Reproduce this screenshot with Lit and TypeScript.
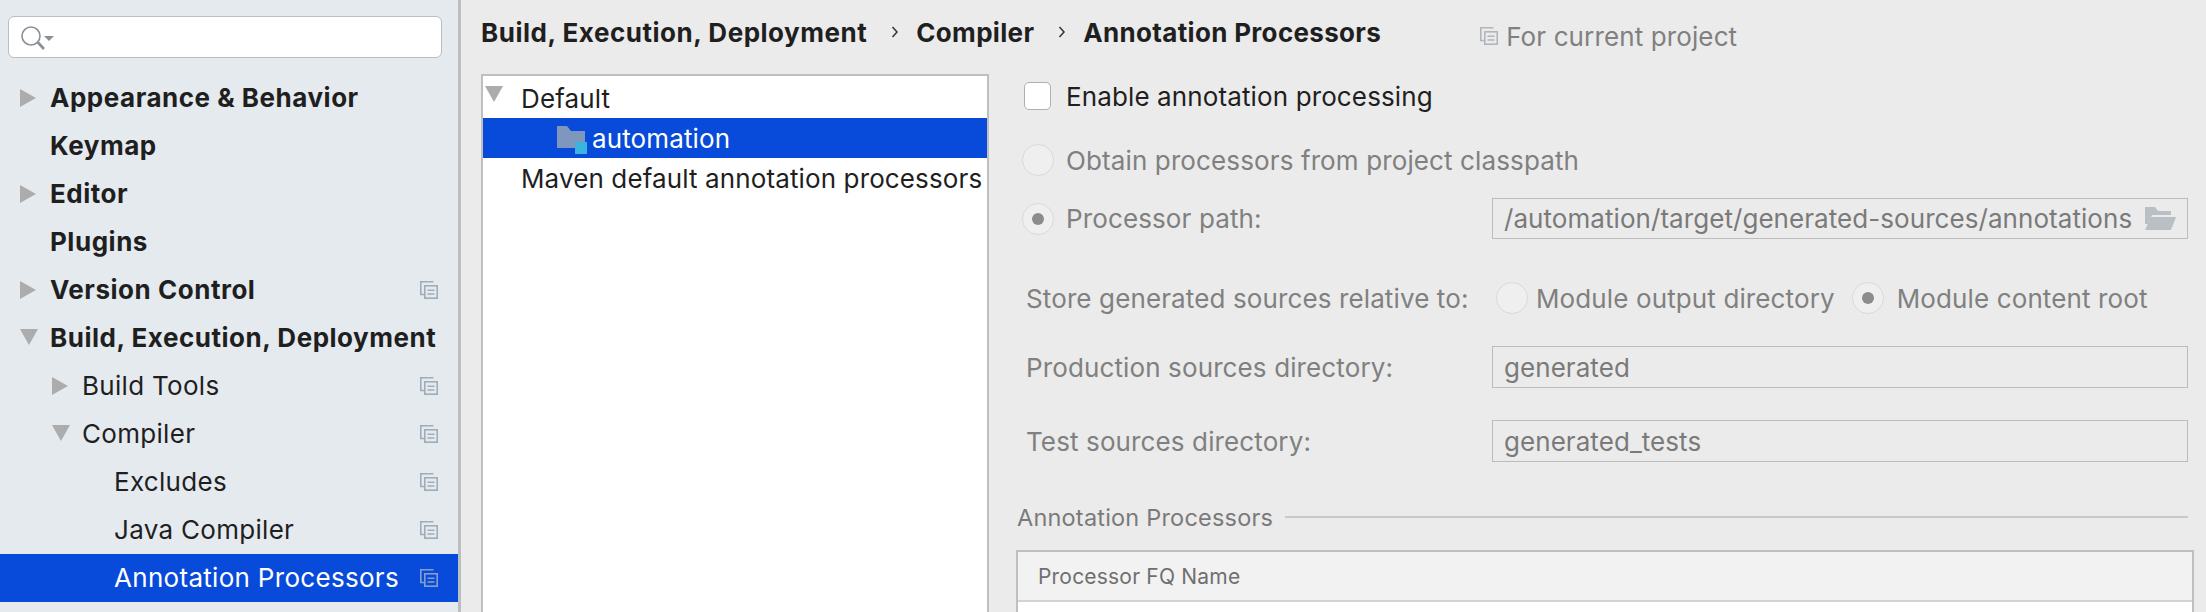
import { LitElement, css, html, svg } from 'lit';
import { customElement } from 'lit/decorators.js';

type NavItem = {
  label: string;
  level: number;
  bold?: boolean;
  arrow?: 'right' | 'down';
  copy?: boolean;
  selected?: boolean;
};

const NAV: NavItem[] = [
  { label: 'Appearance & Behavior', level: 0, bold: true, arrow: 'right' },
  { label: 'Keymap', level: 0, bold: true },
  { label: 'Editor', level: 0, bold: true, arrow: 'right' },
  { label: 'Plugins', level: 0, bold: true },
  { label: 'Version Control', level: 0, bold: true, arrow: 'right', copy: true },
  { label: 'Build, Execution, Deployment', level: 0, bold: true, arrow: 'down' },
  { label: 'Build Tools', level: 1, arrow: 'right', copy: true },
  { label: 'Compiler', level: 1, arrow: 'down', copy: true },
  { label: 'Excludes', level: 2, copy: true },
  { label: 'Java Compiler', level: 2, copy: true },
  { label: 'Annotation Processors', level: 2, copy: true, selected: true },
];

const arrowIcon = (dir: 'right' | 'down') =>
  dir === 'right'
    ? html`<svg class="arrow" width="18" height="18" viewBox="0 0 18 18">
        <path d="M0 0L16 9L0 18Z" fill="#acacac" />
      </svg>`
    : html`<svg class="arrow" width="18" height="18" viewBox="0 0 18 18">
        <path d="M0 0H18L9 16Z" fill="#acacac" />
      </svg>`;

const copyIcon = (color = '#9fadba') => html`<svg width="18" height="18" viewBox="0 0 18 18" fill="none" stroke=${color} stroke-width="1.6">
  ${svg`<path d="M13.5 .8H.8V13.5H4.5" />
  <rect x="4.8" y="4.8" width="12.4" height="12.4" />
  <path d="M7.5 9.2H14.5M7.5 13H14.5" />`}
</svg>`;

const searchIcon = html`<svg width="34" height="26" viewBox="0 0 34 26" fill="none" stroke="#8b9096">
  <circle cx="10" cy="10" r="9" stroke-width="1.6" />
  <path d="M17 16.5L23 23" stroke-width="2.6" />
  <path d="M23 10H33L28 15Z" fill="#8b9096" stroke="none" />
</svg>`;

const chevron = html`<svg class="chevron" width="8" height="14" viewBox="0 0 8 14" fill="none" stroke="#333" stroke-width="1.5">
  <path d="M1.5 2L6 7L1.5 12" />
</svg>`;

const folderOpen = html`<svg width="31" height="23" viewBox="0 0 31 23">
  <path d="M0 0H10L13 4H26V8H7L3 17H0Z" fill="#b9bfc4" />
  <path d="M6 10H31L26 23H0Z" fill="#b9bfc4" />
</svg>`;

const moduleFolder = html`<svg class="module" width="30" height="28" viewBox="0 0 30 28">
  <path d="M0 0H10L14 5H28V22H0Z" fill="#7f96bd" />
  <rect x="18" y="16" width="12" height="12" fill="#3cb4e0" />
</svg>`;

@customElement('app-root')
export class AppRoot extends LitElement {
  static styles = css`
    :host {
      display: flex;
      width: 2206px;
      height: 612px;
      overflow: hidden;
      background: #ebebeb;
      color: #1f1f1f;
      font-family: Inter, 'Liberation Sans', sans-serif;
      font-size: 26px;
      letter-spacing: 0.12px;
    }

    .sidebar {
      flex: none;
      box-sizing: content-box;
      width: 458px;
      border-right: 3px solid #bcbfc2;
      background: #e5eaef;
      padding-top: 16px;
      letter-spacing: 0.3px;
    }
    .search {
      display: flex;
      align-items: center;
      box-sizing: border-box;
      width: 434px;
      height: 42px;
      margin: 0 0 16px 8px;
      padding: 3px 0 0 12px;
      background: #fff;
      border: 1px solid #b8bec4;
      border-radius: 6px;
    }
    .nav-row {
      display: flex;
      align-items: center;
      box-sizing: border-box;
      height: 48px;
      padding-right: 20px;
      white-space: nowrap;
    }
    .nav-row.bold {
      font-weight: 700;
      letter-spacing: 0.52px;
    }
    .nav-row.selected {
      background: #084ad9;
      color: #fff;
    }
    .arrow-slot {
      flex: none;
      width: 30px;
      display: flex;
      align-items: center;
    }
    .nav-label {
      flex: 1;
      margin-top: -2px;
    }

    .main {
      flex: 1;
      min-width: 0;
    }
    .header {
      display: flex;
      align-items: center;
      height: 74px;
      padding: 0 0 10px 20px;
      box-sizing: border-box;
      white-space: nowrap;
    }
    .crumb {
      font-weight: 700;
      letter-spacing: 0.32px;
    }
    .crumb.root {
      letter-spacing: 0.52px;
    }
    .chevron {
      margin: 0 17px 0 24px;
    }
    .scope {
      display: flex;
      align-items: center;
      gap: 8px;
      margin: 8px 0 0 99px;
      color: #808080;
    }

    .body {
      display: flex;
    }
    .tree {
      flex: none;
      box-sizing: border-box;
      width: 508px;
      height: 538px;
      margin-left: 20px;
      background: #fff;
      border: 2px solid #bfbfbf;
      border-bottom: 0;
    }
    .tree-row {
      display: flex;
      align-items: center;
      box-sizing: border-box;
      height: 40px;
      padding-left: 38px;
      white-space: nowrap;
    }
    .tree-row:first-child {
      height: 42px;
      padding-top: 2px;
    }
    .tree-row .arrow {
      margin: -6px 18px 0 -36px;
    }
    .tree-row.selected {
      background: #084ad9;
      color: #fff;
      padding-left: 74px;
      gap: 5px;
    }
    .module {
      margin-top: 4px;
    }

    .form {
      flex: 1;
      min-width: 0;
      padding: 0 12px 0 27px;
      white-space: nowrap;
    }
    .row {
      display: flex;
      align-items: center;
    }
    .disabled {
      color: #808080;
    }
    .check-row {
      height: 28px;
      margin-top: 8px;
      padding-left: 8px;
      gap: 15px;
    }
    .checkbox {
      flex: none;
      box-sizing: border-box;
      width: 27px;
      height: 28px;
      background: #fff;
      border: 1px solid #b0b0b0;
      border-radius: 5px;
    }
    .radio-row {
      height: 32px;
      padding-left: 6px;
      gap: 12px;
    }
    .radio {
      flex: none;
      display: flex;
      align-items: center;
      justify-content: center;
      box-sizing: border-box;
      width: 32px;
      height: 32px;
      background: #efefef;
      border: 1px solid #dadada;
      border-radius: 50%;
    }
    .radio.on::after {
      content: '';
      width: 12px;
      height: 12px;
      border-radius: 50%;
      background: #8c8c8c;
    }
    .obtain {
      margin-top: 34px;
    }
    .path-row {
      height: 41px;
      margin-top: 22px;
      padding-left: 6px;
    }
    .path-row .radio {
      margin-right: 12px;
    }
    .field {
      display: flex;
      align-items: center;
      justify-content: space-between;
      box-sizing: border-box;
      width: 696px;
      height: 100%;
      margin: 0 6px 0 auto;
      padding: 0 11px;
      border: 1px solid #bcbcbc;
      color: #7a7a7a;
      letter-spacing: 0.06px;
    }
    .store-row {
      height: 32px;
      margin-top: 43px;
      padding-left: 10px;
    }
    .store-label {
      width: 466px;
    }
    .store-row .first {
      margin: 0 8px 0 4px;
    }
    .store-row .second {
      margin: 0 13px 0 17px;
    }
    .dir-row {
      height: 42px;
      margin-top: 32px;
      padding-left: 10px;
    }
    .section {
      display: flex;
      align-items: center;
      height: 26px;
      margin: 42px 6px 0 1px;
      gap: 12px;
      font-size: 23.5px;
      letter-spacing: 0.2px;
      color: #7a7a7a;
    }
    .section::after {
      content: '';
      flex: 1;
      height: 2px;
      background: #c8c8c8;
    }
    .table {
      height: 100px;
      margin-top: 20px;
      background: #fff;
      border: 2px solid #bfbfbf;
      border-bottom: 0;
    }
    .table-head {
      display: flex;
      align-items: center;
      box-sizing: border-box;
      height: 50px;
      padding-left: 20px;
      background: #f2f2f2;
      border-bottom: 2px solid #d2d2d2;
      font-size: 21px;
      letter-spacing: 0.2px;
      color: #6f6f6f;
    }
  `;

  private renderNav(item: NavItem) {
    const classes = `nav-row${item.bold ? ' bold' : ''}${item.selected ? ' selected' : ''}`;
    return html`<div class=${classes} style="padding-left:${20 + item.level * 32}px">
      <span class="arrow-slot">${item.arrow ? arrowIcon(item.arrow) : ''}</span>
      <span class="nav-label">${item.label}</span>
      ${item.copy ? copyIcon(item.selected ? '#86a0cc' : undefined) : ''}
    </div>`;
  }

  render() {
    return html`
      <aside class="sidebar">
        <div class="search">${searchIcon}</div>
        ${NAV.map((item) => this.renderNav(item))}
      </aside>
      <div class="main">
        <div class="header">
          <span class="crumb root">Build, Execution, Deployment</span>
          ${chevron}
          <span class="crumb">Compiler</span>
          ${chevron}
          <span class="crumb">Annotation Processors</span>
          <span class="scope">${copyIcon('#b0b6bb')}For current project</span>
        </div>
        <div class="body">
          <div class="tree">
            <div class="tree-row">${arrowIcon('down')}Default</div>
            <div class="tree-row selected">${moduleFolder}automation</div>
            <div class="tree-row">Maven default annotation processors</div>
          </div>
          <div class="form">
            <div class="row check-row"><span class="checkbox"></span>Enable annotation processing</div>
            <div class="row radio-row obtain disabled">
              <span class="radio"></span>Obtain processors from project classpath
            </div>
            <div class="row path-row disabled">
              <span class="radio on"></span>Processor path:
              <div class="field">/automation/target/generated-sources/annotations ${folderOpen}</div>
            </div>
            <div class="row store-row disabled">
              <span class="store-label">Store generated sources relative to:</span>
              <span class="radio first"></span>Module output directory
              <span class="radio on second"></span>Module content root
            </div>
            <div class="row dir-row disabled">
              Production sources directory:
              <div class="field">generated</div>
            </div>
            <div class="row dir-row disabled">
              Test sources directory:
              <div class="field">generated_tests</div>
            </div>
            <div class="section">Annotation Processors</div>
            <div class="table">
              <div class="table-head">Processor FQ Name</div>
            </div>
          </div>
        </div>
      </div>
    `;
  }
}
